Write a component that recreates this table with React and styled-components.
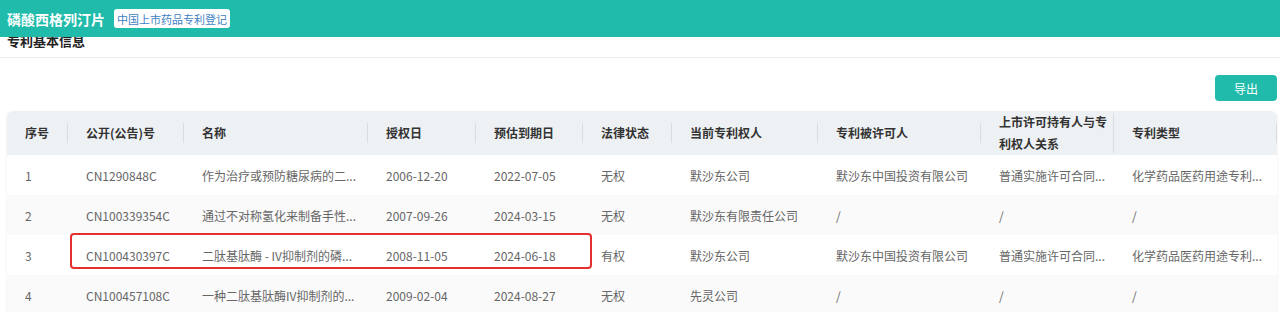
import React from "react";
import styled, { createGlobalStyle } from "styled-components";

const GlobalStyle = createGlobalStyle`
  html, body { margin: 0; padding: 0; background: #fff; }
  body { font-family: "Microsoft YaHei", "Noto Sans CJK SC", "Noto Sans", sans-serif; color: #333; }
  * { box-sizing: border-box; }
`;

const TEAL = "#20bbaa";

const TopBar = styled.header`
  position: sticky;
  top: 0;
  z-index: 3;
  height: 37px;
  background: ${TEAL};
  display: flex;
  align-items: center;
  gap: 9px;
  padding: 0 7px;
`;

const Title = styled.h1`
  margin: 0;
  font-size: 14px;
  line-height: 20px;
  font-weight: 700;
  color: #fff;
`;

const Tag = styled.span`
  display: inline-flex;
  align-items: center;
  height: 19px;
  padding: 0 3px;
  background: #fff;
  border-radius: 3px;
  font-size: 11px;
  color: #3f7fc4;
`;

const SectionHead = styled.div`
  position: relative;
  z-index: 1;
  margin-top: -6px;
  padding: 0 7px 6px;
  font-size: 13px;
  line-height: 20px;
  font-weight: 700;
  color: #222;
  border-bottom: 1px solid #ececec;
`;

const Toolbar = styled.div`
  display: flex;
  justify-content: flex-end;
  padding: 17px 3px 0 7px;
`;

const Button = styled.button`
  width: 62px;
  height: 26px;
  border: none;
  border-radius: 4px;
  background: ${TEAL};
  color: #fff;
  font-family: inherit;
  font-size: 12px;
  cursor: pointer;
`;

const TableWrap = styled.div`
  position: relative;
  margin: 10px 3px 0 7px;
  border-radius: 4px;
  box-shadow: 0 1px 3px rgba(0, 0, 0, 0.08);
`;

const Table = styled.table`
  width: 100%;
  table-layout: fixed;
  border-collapse: collapse;
  font-size: 12px;
`;

const Th = styled.th`
  position: relative;
  height: 41px;
  padding: 0 5px 0 18px;
  background: #eef1f3;
  color: #333;
  font-weight: 700;
  text-align: left;
  line-height: 22px;
  &:first-child { border-top-left-radius: 6px; }
  &:last-child { border-top-right-radius: 6px; }
  &::after {
    content: "";
    position: absolute;
    right: 0;
    top: 50%;
    height: ${(p) => (p.$tall ? 40 : 20)}px;
    margin-top: ${(p) => (p.$tall ? -20 : -10)}px;
    width: 1px;
    background: #d9dde0;
  }
`;

const Tr = styled.tr`
  background: ${(p) => (p.$striped ? "#fafafa" : "#fff")};
`;

const Td = styled.td`
  height: 40px;
  padding: 0 2px 0 18px;
  color: #666;
  white-space: nowrap;
  overflow: visible;
`;

const Highlight = styled.div`
  position: absolute;
  left: 63px;
  top: 122px;
  width: 522px;
  height: 36px;
  border: 2px solid #e3302f;
  border-radius: 4px;
  pointer-events: none;
`;

const columns = [
  { title: "序号", width: 61 },
  { title: "公开(公告)号", width: 116 },
  { title: "名称", width: 184 },
  { title: "授权日", width: 108 },
  { title: "预估到期日", width: 107 },
  { title: "法律状态", width: 89 },
  { title: "当前专利权人", width: 146 },
  { title: "专利被许可人", width: 163 },
  { title: "上市许可持有人与专利权人关系", width: 133, tall: true },
  { title: "专利类型" },
];

const rows = [
  ["1", "CN1290848C", "作为治疗或预防糖尿病的二...", "2006-12-20", "2022-07-05", "无权", "默沙东公司", "默沙东中国投资有限公司", "普通实施许可合同...", "化学药品医药用途专利..."],
  ["2", "CN100339354C", "通过不对称氢化来制备手性...", "2007-09-26", "2024-03-15", "无权", "默沙东有限责任公司", "/", "/", "/"],
  ["3", "CN100430397C", "二肽基肽酶 - IV抑制剂的磷...", "2008-11-05", "2024-06-18", "有权", "默沙东公司", "默沙东中国投资有限公司", "普通实施许可合同...", "化学药品医药用途专利..."],
  ["4", "CN100457108C", "一种二肽基肽酶IV抑制剂的...", "2009-02-04", "2024-08-27", "无权", "先灵公司", "/", "/", "/"],
];

export default function App() {
  return (
    <>
      <GlobalStyle />
      <TopBar>
        <Title>磷酸西格列汀片</Title>
        <Tag>中国上市药品专利登记</Tag>
      </TopBar>
      <SectionHead>专利基本信息</SectionHead>
      <Toolbar>
        <Button>导出</Button>
      </Toolbar>
      <TableWrap>
        <Table>
          <colgroup>
            {columns.map((c, i) => (
              <col key={i} style={c.width ? { width: c.width } : undefined} />
            ))}
          </colgroup>
          <thead>
            <tr>
              {columns.map((c, i) => (
                <Th key={i} $tall={c.tall}>{c.title}</Th>
              ))}
            </tr>
          </thead>
          <tbody>
            {rows.map((r, i) => (
              <Tr key={i} $striped={i % 2 === 1}>
                {r.map((cell, j) => (
                  <Td key={j}>{cell}</Td>
                ))}
              </Tr>
            ))}
          </tbody>
        </Table>
        <Highlight />
      </TableWrap>
    </>
  );
}
